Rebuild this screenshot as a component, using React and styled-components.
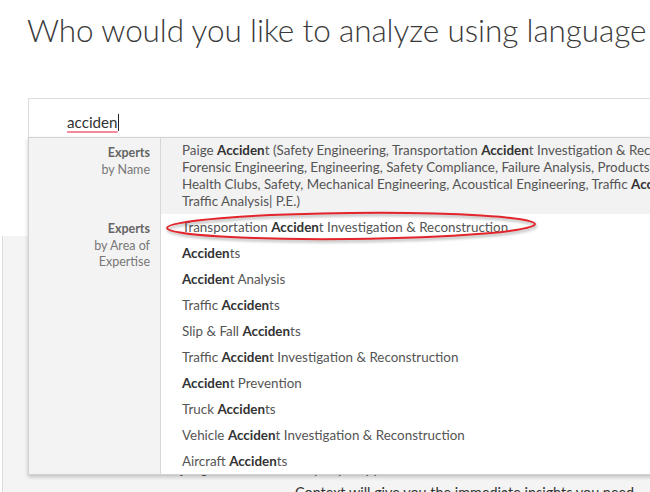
import React from "react";
import styled, { createGlobalStyle } from "styled-components";

const GlobalStyle = createGlobalStyle`
  html, body { margin: 0; padding: 0; background: #fff; }
  body { font-family: Lato, "Open Sans", Arial, sans-serif; }
`;

const Page = styled.div`
  position: relative;
  width: 650px;
  height: 492px;
  overflow: hidden;
  background: #fff;
`;

const Heading = styled.h1`
  margin: 0;
  padding: 11px 0 0 27px;
  font-family: Lato, sans-serif;
  font-weight: 300;
  font-size: 31.5px;
  line-height: 38px;
  letter-spacing: -0.1px;
  color: #3a3a3a;
  white-space: nowrap;
`;

const SearchWrap = styled.div`
  position: relative;
  margin: 49px 0 0 28px;
  width: 700px;
  z-index: 2;
`;

const SearchBox = styled.div`
  box-sizing: border-box;
  height: 40px;
  border-top: 1px solid #dcdcdc;
  border-left: 1px solid #dcdcdc;
  padding: 13px 0 0 38px;
  display: flex;
  align-items: flex-start;
  font-size: 15.2px;
  line-height: 20px;
  color: #333;
`;

const Typed = styled.span`
  text-decoration: underline solid #f28aa0;
  text-decoration-thickness: 2px;
  text-underline-offset: 3px;
`;

const Caret = styled.span`
  display: inline-block;
  width: 1px;
  height: 17px;
  margin-top: 2px;
  background: #222;
`;

const Dropdown = styled.div`
  position: absolute;
  top: 39px;
  left: 0;
  width: 680px;
  background: #fff;
  border: 1px solid #d2d2d2;
  box-shadow: 0 2px 4px rgba(0, 0, 0, 0.22);
  display: flex;
  flex-direction: column;
`;

const Group = styled.div`
  display: grid;
  grid-template-columns: 132px 1fr;
`;

const Label = styled.div`
  background: #f3f3f3;
  border-right: 1px solid #d8d8d8;
  padding: 7px 10px 0 0;
  text-align: right;
  font-size: 12.5px;
  line-height: 16.5px;
  color: #777;
`;

const LabelTitle = styled.div`
  font-weight: 700;
  color: #666;
`;

const Items = styled.div`
  display: flex;
  flex-direction: column;
`;

const Item = styled.div`
  padding: ${(p) => (p.$multi ? "4px 21px" : "0 21px")};
  line-height: ${(p) => (p.$multi ? "17px" : "26px")};
  background: ${(p) => (p.$active ? "#f2f2f2" : "transparent")};
  font-size: 13.4px;
  color: #555;
  white-space: nowrap;
`;

const Line = styled.div``;

const Hit = styled.b`
  font-weight: 700;
  color: #333;
`;

const Section = styled.div`
  margin: 98px 0 0 2px;
  border-left: 1px solid #dcdcdc;
  background: #f4f4f4;
  height: 300px;
  padding-top: 219px;
  font-size: 14.4px;
  line-height: 25px;
  white-space: nowrap;
`;

const SectionLine = styled.div`
  padding-left: ${(p) => p.$indent}px;
  color: ${(p) => (p.$strong ? "#333" : "#555")};
`;

const Annotation = styled.svg`
  position: absolute;
  left: 160px;
  top: 206px;
  width: 392px;
  height: 44px;
  z-index: 3;
  overflow: visible;
  filter: drop-shadow(1px 2px 1.5px rgba(0, 0, 0, 0.35));
`;

const hl = (text) => {
  if (text.indexOf("Acciden") === -1) return text;
  const parts = text.split("Acciden");
  const out = [];
  parts.forEach((p, i) => {
    if (i > 0) out.push(<Hit key={"h" + i}>Acciden</Hit>);
    if (p) out.push(<React.Fragment key={"t" + i}>{p}</React.Fragment>);
  });
  return out;
};

const nameLines = [
  "Paige Accident (Safety Engineering, Transportation Accident Investigation & Reconstruction,",
  "Forensic Engineering, Engineering, Safety Compliance, Failure Analysis, Products Liability,",
  "Health Clubs, Safety, Mechanical Engineering, Acoustical Engineering, Traffic Accident Investigation,",
  "Traffic Analysis| P.E.)",
];

const areaItems = [
  "Transportation Accident Investigation & Reconstruction",
  "Accidents",
  "Accident Analysis",
  "Traffic Accidents",
  "Slip & Fall Accidents",
  "Traffic Accident Investigation & Reconstruction",
  "Accident Prevention",
  "Truck Accidents",
  "Vehicle Accident Investigation & Reconstruction",
  "Aircraft Accidents",
];

export default function App() {
  return (
    <Page>
      <GlobalStyle />
      <Heading>Who would you like to analyze using language</Heading>
      <SearchWrap>
        <SearchBox>
          <Typed>acciden</Typed>
          <Caret />
        </SearchBox>
        <Dropdown>
          <Group>
            <Label>
              <LabelTitle>Experts</LabelTitle>
              by Name
            </Label>
            <Items>
              <Item $multi $active>
                {nameLines.map((l, i) => (
                  <Line key={i}>{hl(l)}</Line>
                ))}
              </Item>
            </Items>
          </Group>
          <Group>
            <Label>
              <LabelTitle>Experts</LabelTitle>
              by Area of
              <br />
              Expertise
            </Label>
            <Items>
              {areaItems.map((t, i) => (
                <Item key={i}>{hl(t)}</Item>
              ))}
            </Items>
          </Group>
        </Dropdown>
      </SearchWrap>
      <Section>
        <SectionLine $indent={167}>
          a judge, uncover a company's opportunities and risks, or determine what could happen next,
        </SectionLine>
        <SectionLine $indent={292} $strong>
          Context will give you the immediate insights you need.
        </SectionLine>
      </Section>
      <Annotation viewBox="0 0 392 44">
        <ellipse
          cx="191"
          cy="20"
          rx="184"
          ry="13"
          fill="none"
          stroke="#e3242b"
          strokeWidth="2"
          transform="rotate(-0.6 191 20)"
        />
      </Annotation>
    </Page>
  );
}
